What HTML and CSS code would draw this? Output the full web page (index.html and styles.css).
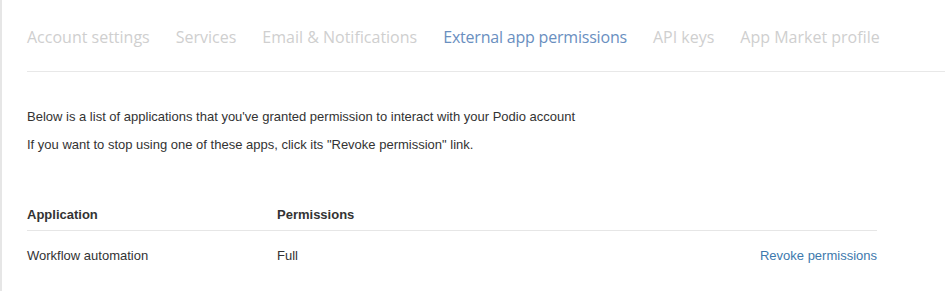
FILE: index.html
```html
<!DOCTYPE html>
<html>
<head>
<meta charset="utf-8">
<link rel="stylesheet" href="styles.css">
</head>
<body>
<div class="page">
  <nav class="tabs">
    <a class="tab">Account settings</a>
    <a class="tab">Services</a>
    <a class="tab">Email &amp; Notifications</a>
    <a class="tab active">External app permissions</a>
    <a class="tab">API keys</a>
    <a class="tab">App Market profile</a>
  </nav>
  <div class="content">
    <p class="intro">Below is a list of applications that you've granted permission to interact with your Podio account</p>
    <p class="intro">If you want to stop using one of these apps, click its "Revoke permission" link.</p>
    <table class="apps">
      <thead>
        <tr><th class="c-app">Application</th><th>Permissions</th><th></th></tr>
      </thead>
      <tbody>
        <tr><td class="c-app">Workflow automation</td><td>Full</td><td class="c-act"><a class="revoke">Revoke permissions</a></td></tr>
      </tbody>
    </table>
  </div>
</div>
</body>
</html>
```
FILE: styles.css
```css
html, body { margin: 0; padding: 0; background: #fff; }
body { border-left: 2px solid #e6e6e6; min-height: 291px; box-sizing: border-box; }
.page { padding-left: 25px; }
.tabs {
  display: flex;
  gap: 26px;
  padding: 25px 0 22px;
  border-bottom: 1px solid #e8e8e8;
  font-family: "Open Sans", sans-serif;
  font-size: 16px;
  line-height: 24px;
}
.tab { color: #cfcfcf; white-space: nowrap; }
.tab.active { color: #6a8fbf; letter-spacing: -0.2px; }
.content {
  width: 850px;
  font-family: "Liberation Sans", Arial, sans-serif;
  font-size: 13px;
  color: #333;
  padding-top: 37px;
}
.intro { margin: 0 0 13px; line-height: 15px; }
.apps { width: 100%; border-collapse: collapse; margin-top: 55px; }
.apps th {
  text-align: left;
  font-weight: bold;
  padding: 0 0 8px;
  border-bottom: 1px solid #e6e6e6;
  line-height: 15px;
}
.apps td { padding: 17px 0 0; line-height: 15px; }
.c-app { width: 250px; }
.c-act { text-align: right; }
.revoke { color: #3d79ad; }
```
